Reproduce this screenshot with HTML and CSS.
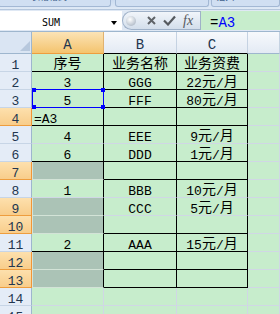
FILE: index.html
```html
<!DOCTYPE html>
<html lang="zh-CN">
<head>
<meta charset="utf-8">
<title>Sheet</title>
<link rel="stylesheet" href="styles.css">
</head>
<body>
<div class="ribbon">
  <div class="rbtn b1"><span class="rtxt">表格格式</span></div>
  <div class="rbtn b2"></div>
  <div class="rbtn b3"><span class="rtxt">插入</span></div>
</div>
<div class="fbar">
  <div class="namebox"><span class="nb-text">SUM</span><span class="nb-arrow"></span></div>
  <div class="fbtns">
    <span class="orb"></span>
    <svg class="ic-x" width="9" height="9" viewBox="0 0 9 9"><path d="M1 1L8 8M8 1L1 8" stroke="#5f6368" stroke-width="2" fill="none"/></svg>
    <svg class="ic-ok" width="13" height="11" viewBox="0 0 13 11"><path d="M1 5.5L5 9.5L12 1.5" stroke="#55595e" stroke-width="2.2" fill="none"/></svg>
    <span class="fx">fx</span>
  </div>
  <div class="finput">=<span class="ref">A3</span></div>
</div>
<div class="sheet">
  <div class="corner"><svg width="10" height="10" viewBox="0 0 10 10"><path d="M10 0V10H0Z" fill="#b7c8dd"/></svg></div>
  <div class="ch on">A</div><div class="ch tb">B</div><div class="ch tb">C</div><div class="ch"></div>

  <div class="rh">1</div>
  <div class="c t bb"><span class="zh">序号</span></div>
  <div class="c t bb"><span class="zh">业务名称</span></div>
  <div class="c t bb"><span class="zh">业务资费</span></div>
  <div class="c"></div>

  <div class="rh">2</div>
  <div class="c t bb">3</div>
  <div class="c t bb">GGG</div>
  <div class="c t bb">22<span class="zh">元</span>/<span class="zh">月</span></div>
  <div class="c"></div>

  <div class="rh">3</div>
  <div class="c t bb refcell">5<span class="refbox"></span><span class="h tl"></span><span class="h tr"></span><span class="h bl"></span><span class="h br"></span></div>
  <div class="c t bb">FFF</div>
  <div class="c t bb">80<span class="zh">元</span>/<span class="zh">月</span></div>
  <div class="c"></div>

  <div class="rh on">4</div>
  <div class="c t bb l">=A3</div>
  <div class="c t bb"></div>
  <div class="c t bb"></div>
  <div class="c"></div>

  <div class="rh">5</div>
  <div class="c t">4</div>
  <div class="c t">EEE</div>
  <div class="c t">9<span class="zh">元</span>/<span class="zh">月</span></div>
  <div class="c"></div>

  <div class="rh">6</div>
  <div class="c t bb">6</div>
  <div class="c t bb">DDD</div>
  <div class="c t bb">1<span class="zh">元</span>/<span class="zh">月</span></div>
  <div class="c"></div>

  <div class="rh on">7</div>
  <div class="c t bb sel"></div>
  <div class="c t bb"></div>
  <div class="c t bb"></div>
  <div class="c"></div>

  <div class="rh">8</div>
  <div class="c t">1</div>
  <div class="c t">BBB</div>
  <div class="c t">10<span class="zh">元</span>/<span class="zh">月</span></div>
  <div class="c"></div>

  <div class="rh on">9</div>
  <div class="c t sel"></div>
  <div class="c t">CCC</div>
  <div class="c t">5<span class="zh">元</span>/<span class="zh">月</span></div>
  <div class="c"></div>

  <div class="rh on">10</div>
  <div class="c t bb sel"></div>
  <div class="c t bb"></div>
  <div class="c t bb"></div>
  <div class="c"></div>

  <div class="rh">11</div>
  <div class="c t bb">2</div>
  <div class="c t bb">AAA</div>
  <div class="c t bb">15<span class="zh">元</span>/<span class="zh">月</span></div>
  <div class="c"></div>

  <div class="rh on">12</div>
  <div class="c t bb sel"></div>
  <div class="c t bb"></div>
  <div class="c t bb"></div>
  <div class="c"></div>

  <div class="rh on">13</div>
  <div class="c t bb sel"></div>
  <div class="c t bb"></div>
  <div class="c t bb"></div>
  <div class="c"></div>

  <div class="rh">14</div>
  <div class="c"></div><div class="c"></div><div class="c"></div><div class="c"></div>

  <div class="rh">15</div>
  <div class="c"></div><div class="c"></div><div class="c"></div><div class="c"></div>
</div>
</body>
</html>
```
FILE: styles.css
```css
* { box-sizing: border-box; margin: 0; padding: 0; }
html, body { width: 280px; height: 314px; overflow: hidden; background: #c7edcc; }
body {
  font-family: "Liberation Mono", "Noto Sans CJK SC", monospace;
  font-size: 13px;
  color: #000;
}

/* ribbon remnant */
.ribbon {
  height: 10px;
  display: flex;
  gap: 4px;
  background: linear-gradient(#cbdbf0, #e0eaf6);
  border-bottom: 1px solid #b4c6dc;
}
.rbtn {
  height: 7px;
  border: 1px solid #a3b8d4;
  border-top: 0;
  border-radius: 0 0 3px 3px;
  overflow: hidden;
  background: #d0dff2;
}
.b1 { width: 115px; margin-left: -2px; padding-left: 32px; }
.b2 { width: 96px; }
.b3 { width: 70px; margin-left: -2px; padding-left: 4px; }
.rtxt {
  display: block;
  margin-top: -9px;
  font-family: "Noto Sans CJK SC", sans-serif;
  font-size: 9px;
  line-height: 11px;
  color: #3e5f8a;
}

/* formula bar */
.fbar {
  height: 22px;
  display: flex;
  align-items: center;
  background: #dfe8f4;
  border-bottom: 1px solid #9eb6ce;
}
.namebox {
  width: 122px;
  height: 19px;
  background: #fff;
  display: flex;
  align-items: center;
  padding: 4px 5px 0 42px;
}
.nb-text {
  font-family: "DejaVu Sans Mono", monospace;
  font-size: 10px;
  line-height: 10px;
}
.nb-arrow {
  margin-left: auto;
  width: 0;
  height: 0;
  border-left: 3.5px solid transparent;
  border-right: 3.5px solid transparent;
  border-top: 4px solid #000;
}
.fbtns {
  width: 78px;
  height: 19px;
  display: flex;
  align-items: center;
  border: 1px solid #9fb1c8;
  border-right: 0;
  border-radius: 10px 0 0 10px;
  background: linear-gradient(#f1f5fa, #d3deeb);
}
.orb {
  width: 10px;
  height: 10px;
  margin-left: 3px;
  border-radius: 50%;
  background: radial-gradient(circle at 40% 35%, #ffffff, #c3cbd5 60%, #9ea9b7);
}
.ic-x { margin-left: 11px; }
.ic-ok { margin-left: 7px; }
.fx {
  margin-left: 7px;
  font-family: "Liberation Serif", serif;
  font-style: italic;
  font-size: 14px;
  line-height: 14px;
  color: #55595e;
}
.finput {
  flex: 1;
  height: 19px;
  background: #c7edcc;
  border-left: 1px solid #9fb1c8;
  padding: 5px 0 0 9px;
  font-size: 14px;
  line-height: 14px;
}
.ref { color: #0000ff; }

/* sheet */
.sheet {
  display: grid;
  grid-template-columns: 32px 72px 73px 71px 1fr;
  grid-template-rows: 22px;
  grid-auto-rows: 18px;
}
.corner {
  background: #dae5f3;
  border-right: 1px solid #9eb6ce;
  border-bottom: 1px solid #9eb6ce;
  display: flex;
  align-items: flex-end;
  justify-content: flex-end;
  padding: 0 1px 2px 0;
}
.ch {
  background: linear-gradient(#f7f9fc, #e3eaf4);
  border-right: 1px solid #c5d2e2;
  border-bottom: 1px solid #9eb6ce;
  text-align: center;
  font-size: 14px;
  line-height: 13px;
  padding-top: 7px;
  color: #22364f;
}
.ch.on {
  background: linear-gradient(#fbe3b6, #f4c46e);
  border-right-color: #e0b270;
  border-bottom-color: #ee9d3e;
}
.ch.tb { border-bottom-color: #000; }

.rh {
  background: #e4ecf7;
  border-right: 1px solid #9eb6ce;
  border-bottom: 1px solid #c7d5e6;
  text-align: center;
  line-height: 13px;
  padding-top: 5px;
  color: #22364f;
}
.rh.on {
  background: linear-gradient(#fde0ad, #f8cd8b);
  border-right-color: #f29536;
  border-bottom-color: #ee9d3e;
}

.c {
  border-right: 1px solid #d0d7e5;
  border-bottom: 1px solid #d0d7e5;
  text-align: center;
  line-height: 13px;
  padding-top: 5px;
  white-space: nowrap;
}
.t { border-right-color: #000; }
.bb { border-bottom-color: #000; }
.l { text-align: left; padding-left: 2px; }
.sel {
  background: #abc3b6;
  border-bottom-color: #d3e3d7;
  box-shadow: inset 1px 0 0 #d3e3d7;
}
.zh {
  font-family: "Noto Sans CJK SC", sans-serif;
  font-size: 14px;
  line-height: 7px;
  vertical-align: 1px;
}

/* formula reference highlight on A3 */
.refcell { position: relative; }
.refbox {
  position: absolute;
  top: -1px;
  right: -1px;
  bottom: -1px;
  left: 0;
  border: 1px solid #0000ff;
}
.h {
  position: absolute;
  width: 4px;
  height: 4px;
  background: #0000ff;
}
.h.tl { left: 0; top: -2px; }
.h.tr { right: -2px; top: -2px; }
.h.bl { left: 0; bottom: -2px; }
.h.br { right: -2px; bottom: -2px; }
```
